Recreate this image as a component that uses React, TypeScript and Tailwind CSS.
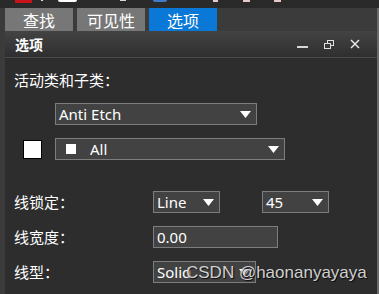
import React from "react";

const cjk = '"Noto Sans CJK SC", "Noto Sans", sans-serif';
const ui = '"Noto Sans", "Noto Sans CJK SC", sans-serif';

const boxCls =
  "flex items-center h-[22px] bg-[#424242] border border-[#7d7d7d] text-white text-[15px] leading-[20px]";

function Arrow() {
  return (
    <svg width="11" height="7" viewBox="0 0 11 7" className="shrink-0">
      <polygon points="0,0 11,0 5.5,7" fill="#ffffff" />
    </svg>
  );
}

function Dropdown({ w, children }: { w: string; children: React.ReactNode }) {
  return (
    <div className={boxCls + " pl-[3px] pr-[5px] " + w} style={{ fontFamily: ui }}>
      <div className="flex-1 flex items-center min-w-0 whitespace-nowrap">{children}</div>
      <Arrow />
    </div>
  );
}

function Label({ children }: { children: React.ReactNode }) {
  return (
    <span className="w-[139px] shrink-0 text-white text-[15px] leading-[22px]" style={{ fontFamily: cjk }}>
      {children}
    </span>
  );
}

function TopStrip() {
  return (
    <div className="h-[8px] bg-[#2a2a2a] flex items-start shrink-0">
      <span className="ml-[15px] w-[17px] h-[3px] bg-[#c8121c]" />
      <span className="ml-[9px] w-[2px] h-[1px] bg-[#e0e0e0]" />
      <span className="ml-[15px] w-[19px] h-[2px] bg-white rounded-b-[3px]" />
      <span className="ml-[43px] w-[6px] h-[1px] bg-[#d8d8d8]" />
      <span className="ml-[27px] w-[14px] h-[2px] bg-[#3f7cc8] rounded-b-full" />
      <span className="ml-[46px] w-[5px] h-[2px] bg-[#e8c8c8]" />
      <span className="ml-[25px] w-[7px] h-[2px] bg-[#e8c8c8]" />
      <span className="ml-[24px] w-[7px] h-[2px] bg-[#e8c8c8]" />
    </div>
  );
}

function Tab({ label, active }: { label: string; active?: boolean }) {
  return (
    <div
      className={
        "w-[68px] h-[23px] flex items-center justify-center text-white text-[16px] leading-[20px] " +
        (active ? "bg-[#0a78d7]" : "bg-[#777777]")
      }
      style={{ fontFamily: cjk }}
    >
      {label}
    </div>
  );
}

export default function App() {
  return (
    <div className="w-[379px] h-[294px] bg-[#2d2d2d] flex flex-col overflow-hidden relative">
      <TopStrip />
      <div className="flex flex-1 min-h-0">
        <div className="w-[5px] bg-[#3b3b3b] shrink-0" />
        <div className="flex-1 flex flex-col min-w-0">
          {/* tabs */}
          <div className="h-[23px] bg-[#3b3b3b] flex gap-[4px] shrink-0">
            <Tab label="查找" />
            <Tab label="可见性" />
            <Tab label="选项" active />
          </div>
          {/* panel title */}
          <div className="h-[26px] bg-gradient-to-b from-[#434343] to-[#2f2f2f] flex items-center pl-[10px] pr-[17px] shrink-0">
            <span className="text-white font-bold text-[14px] leading-[18px]" style={{ fontFamily: cjk }}>
              选项
            </span>
            <div className="flex-1" />
            <div className="flex items-center gap-[16px]">
              <svg width="11" height="10" viewBox="0 0 11 10">
                <rect x="0" y="7" width="11" height="2" fill="#d8d8d8" />
              </svg>
              <svg width="10" height="9" viewBox="0 0 10 9">
                <rect x="3.5" y="0.5" width="6" height="5" fill="none" stroke="#e0e0e0" />
                <rect x="0.5" y="3.5" width="6" height="5" fill="#3a3a3a" stroke="#e0e0e0" />
              </svg>
              <svg width="10" height="10" viewBox="0 0 10 10">
                <path d="M1 1 L9 9 M9 1 L1 9" stroke="#e8e8e8" strokeWidth="1.5" />
              </svg>
            </div>
          </div>
          <div className="h-px bg-[#4b4b4b] shrink-0" />

          {/* content */}
          <div className="flex flex-col pl-[9px]">
            <div className="mt-[12px] h-[20px] text-white text-[15px] leading-[20px]" style={{ fontFamily: cjk }}>
              活动类和子类：
            </div>
            <div className="mt-[13px] ml-[41px]">
              <Dropdown w="w-[202px]">Anti Etch</Dropdown>
            </div>
            <div className="mt-[13px] flex items-center">
              <div className="ml-[9px] w-[19px] h-[19px] bg-white border-[1.5px] border-black shrink-0" />
              <div className="ml-[13px]">
                <Dropdown w="w-[230px]">
                  <span className="ml-[7px] w-[10px] h-[10px] bg-white shrink-0" />
                  <span className="ml-[14px]">All</span>
                </Dropdown>
              </div>
            </div>
            <div className="mt-[31px] flex items-center">
              <Label>线锁定：</Label>
              <Dropdown w="w-[67px]">Line</Dropdown>
              <div className="ml-[42px]">
                <Dropdown w="w-[67px]">45</Dropdown>
              </div>
            </div>
            <div className="mt-[13px] flex items-center">
              <Label>线宽度：</Label>
              <div className={boxCls + " w-[125px] pl-[3px]"} style={{ fontFamily: ui }}>
                0.00
              </div>
            </div>
            <div className="mt-[13px] flex items-center">
              <Label>线型：</Label>
              <Dropdown w="w-[103px]">Solid</Dropdown>
            </div>
          </div>
        </div>
        <div className="w-[2px] bg-[#6a6a6a] shrink-0" />
      </div>

      {/* watermark */}
      <span
        className="absolute left-[186px] top-[263px] text-[17px] leading-[20px] text-[#d0d0d0] whitespace-nowrap [text-shadow:1px_1px_1px_rgba(0,0,0,0.8)]"
        style={{ fontFamily: '"Liberation Sans", Arial, sans-serif' }}
      >
        CSDN @haonanyayaya
      </span>
    </div>
  );
}
